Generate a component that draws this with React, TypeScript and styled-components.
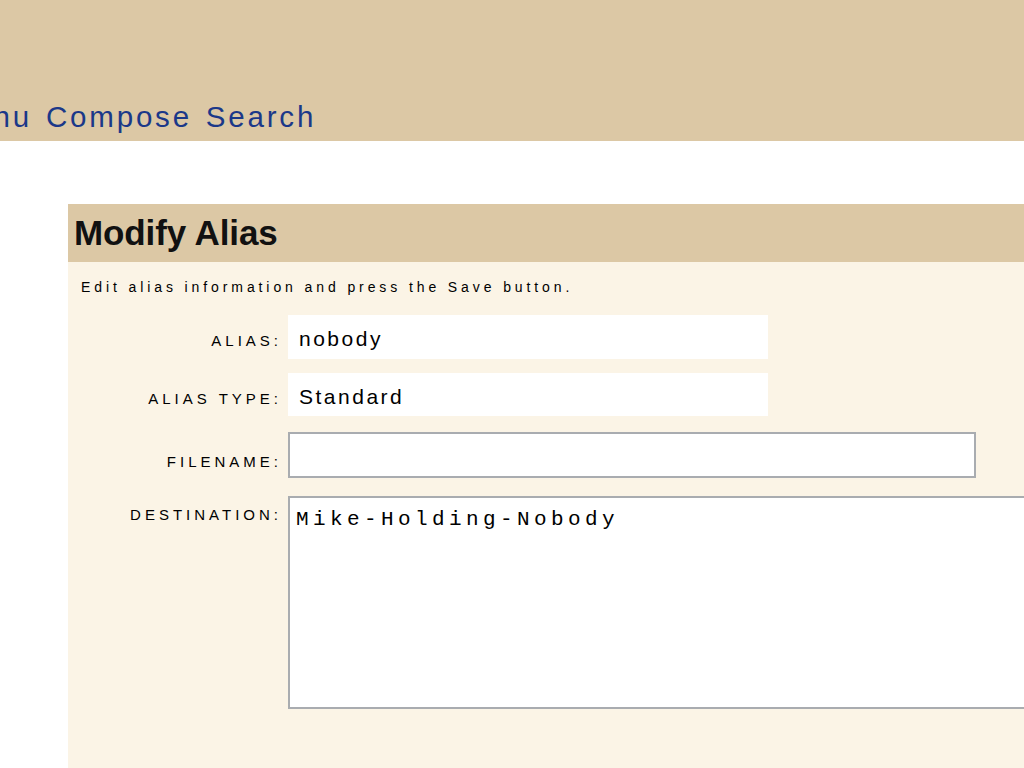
import React from 'react';
import styled, { createGlobalStyle } from 'styled-components';

// ─── Global ───────────────────────────────────────────────────────────────────
const GlobalStyle = createGlobalStyle`
  html, body {
    margin: 0;
    padding: 0;
    background: #ffffff;
    overflow: hidden;
  }
  body {
    font-family: "Liberation Sans", Arial, sans-serif;
    color: #000000;
  }
`;

// ─── Header / Nav ─────────────────────────────────────────────────────────────
const Header = styled.header`
  height: 141px;
  box-sizing: border-box;
  background: #dcc8a5;
  display: flex;
  align-items: flex-end;
  padding-bottom: 10px;
`;

const Nav = styled.nav`
  display: flex;
  gap: 14px;
  margin-left: -53px;
`;

const NavLink = styled.a`
  font-size: 29.5px;
  line-height: 29px;
  letter-spacing: 2.8px;
  color: #1b3889;
  text-decoration: none;
  white-space: nowrap;
`;

// ─── Panel ────────────────────────────────────────────────────────────────────
const Panel = styled.section`
  margin: 63px 0 0 68px;
  width: 1000px;
  background: #fbf4e6;
  min-height: 600px;
`;

const PanelTitle = styled.h1`
  margin: 0;
  height: 58px;
  padding-left: 6px;
  background: #dcc8a5;
  font-size: 35px;
  line-height: 58px;
  font-weight: 700;
  letter-spacing: -0.1px;
  color: #111111;
`;

const PanelBody = styled.div`
  padding: 15px 0 80px 0;
`;

const Intro = styled.p`
  margin: 0 0 18px 13px;
  font-size: 14px;
  line-height: 20px;
  letter-spacing: 3.9px;
  color: #000000;
`;

// ─── Form rows ────────────────────────────────────────────────────────────────
const Row = styled.div<{ $space: number }>`
  display: flex;
  align-items: flex-start;
  gap: 6px;
  margin-bottom: ${(p) => p.$space}px;
`;

const Label = styled.label<{ $top: number }>`
  width: 214px;
  flex: none;
  box-sizing: border-box;
  padding-top: ${(p) => p.$top}px;
  text-align: right;
  font-size: 15px;
  line-height: 20px;
  letter-spacing: 4px;
  text-transform: uppercase;
  color: #000000;
`;

const ValueBox = styled.div<{ $height: number }>`
  width: 480px;
  height: ${(p) => p.$height}px;
  box-sizing: border-box;
  padding: 12px 0 0 11px;
  background: #ffffff;
  font-size: 21px;
  line-height: 24px;
  letter-spacing: 2.5px;
  color: #000000;
`;

const TextInput = styled.input`
  width: 688px;
  height: 46px;
  box-sizing: border-box;
  margin: 0;
  padding: 0 8px;
  border: 2px solid #a9acb0;
  background: #ffffff;
  font-family: "Liberation Sans", Arial, sans-serif;
  font-size: 21px;
  outline: none;
`;

const TextArea = styled.textarea`
  width: 760px;
  height: 213px;
  box-sizing: border-box;
  margin: 0;
  padding: 10px 6px;
  border: 2px solid #a9acb0;
  background: #ffffff;
  font-family: "Liberation Mono", "Courier New", monospace;
  font-size: 21px;
  line-height: 24px;
  letter-spacing: 4.4px;
  color: #000000;
  resize: none;
  outline: none;
  display: block;
`;

// ─── Component ────────────────────────────────────────────────────────────────
export default function App() {
  return (
    <>
      <GlobalStyle />
      <Header>
        <Nav>
          <NavLink href="#">Menu</NavLink>
          <NavLink href="#">Compose</NavLink>
          <NavLink href="#">Search</NavLink>
        </Nav>
      </Header>

      <Panel>
        <PanelTitle>Modify Alias</PanelTitle>
        <PanelBody>
          <Intro>Edit alias information and press the Save button.</Intro>

          <Row $space={14}>
            <Label $top={16}>Alias:</Label>
            <ValueBox $height={44}>nobody</ValueBox>
          </Row>
          <Row $space={16}>
            <Label $top={16}>Alias Type:</Label>
            <ValueBox $height={43}>Standard</ValueBox>
          </Row>
          <Row $space={18}>
            <Label $top={20}>Filename:</Label>
            <TextInput type="text" defaultValue="" />
          </Row>
          <Row $space={0}>
            <Label $top={9}>Destination:</Label>
            <TextArea defaultValue="Mike-Holding-Nobody" />
          </Row>
        </PanelBody>
      </Panel>
    </>
  );
}
